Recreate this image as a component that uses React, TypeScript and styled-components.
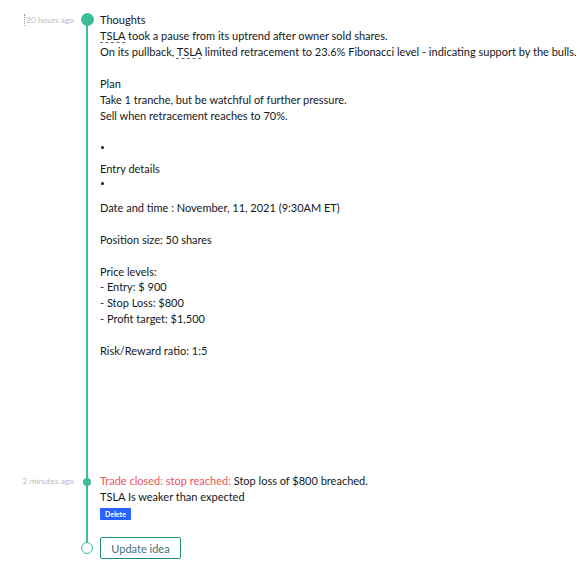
import React from "react";
import styled, { createGlobalStyle } from "styled-components";

const Global = createGlobalStyle`
  html, body { margin: 0; padding: 0; background: #ffffff; }
  body { font-family: "Lato", "DejaVu Sans", sans-serif; color: #131722; }
`;

const TEAL = "#3cbc98";

const Timeline = styled.div`
  display: flex;
  flex-direction: column;
  padding-top: 12px;
  width: 580px;
`;

const Row = styled.div`
  display: flex;
  align-items: stretch;
`;

const Time = styled.div<{ $bordered?: boolean }>`
  width: 74px;
  flex: none;
  display: flex;
  justify-content: flex-end;
  align-items: flex-start;
  height: 16px;
  line-height: 16px;
  font-size: 8.4px;
  color: #bdb9c9;
  span {
    line-height: 12px;
    margin-top: 2px;
    ${(p) => (p.$bordered ? "border-left: 1px dotted #9a97a4; padding-left: 1px;" : "")}
  }
`;

const Rail = styled.div<{ $top: number; $bottom?: number | null }>`
  width: 26px;
  flex: none;
  position: relative;
  &::before {
    content: "";
    position: absolute;
    left: 12px;
    width: 2px;
    top: ${(p) => p.$top}px;
    ${(p) => (p.$bottom == null ? "bottom: 0;" : `height: ${p.$bottom}px;`)}
    background: ${TEAL};
  }
`;

const Dot = styled.div<{ $size: number; $top: number; $hollow?: boolean }>`
  position: absolute;
  left: ${(p) => 13 - p.$size / 2}px;
  top: ${(p) => p.$top - p.$size / 2}px;
  width: ${(p) => p.$size}px;
  height: ${(p) => p.$size}px;
  border-radius: 50%;
  box-sizing: border-box;
  background: ${(p) => (p.$hollow ? "#fff" : TEAL)};
  border: ${(p) => (p.$hollow ? `1px solid ${TEAL}` : "none")};
  z-index: 1;
`;

const Body = styled.div<{ $pb?: number }>`
  flex: 1;
  font-size: 11px;
  line-height: 16px;
  color: #131722;
  padding-bottom: ${(p) => p.$pb ?? 0}px;
`;

const Line = styled.div<{ $mt?: number }>`
  min-height: 16px;
  margin-top: ${(p) => p.$mt ?? 0}px;
  white-space: nowrap;
`;

const Ticker = styled.span`
  text-decoration: underline dashed #6a6d78;
  text-underline-offset: 2px;
`;

const Bullet = styled.ul<{ $mt?: number }>`
  margin: ${(p) => p.$mt ?? 0}px 0 0 0;
  padding: 0;
  list-style: none;
  li {
    height: 16px;
    position: relative;
  }
  li::before {
    content: "";
    position: absolute;
    left: 1px;
    top: 6px;
    width: 3px;
    height: 3px;
    border-radius: 50%;
    background: #131722;
  }
`;

const Red = styled.span`
  color: #f0535c;
`;

const DeleteBtn = styled.button`
  display: block;
  margin-top: 3px;
  height: 12px;
  width: 31px;
  padding: 0;
  border: none;
  border-radius: 1px;
  background: #2962ff;
  color: #fff;
  font-family: "Lato", "DejaVu Sans", sans-serif;
  font-size: 7px;
  font-weight: 700;
  line-height: 12px;
`;

const UpdateBtn = styled.button`
  width: 81px;
  height: 22px;
  box-sizing: border-box;
  border: 1px solid #1f8f7b;
  border-radius: 2px;
  background: #fff;
  color: #3e6f80;
  font-family: "Lato", "DejaVu Sans", sans-serif;
  font-size: 11px;
  padding: 0;
`;

export default function App() {
  return (
    <>
      <Global />
      <Timeline>
        <Row>
          <Time $bordered>
            <span>20 hours ago</span>
          </Time>
          <Rail $top={7}>
            <Dot $size={13} $top={7} />
          </Rail>
          <Body $pb={114}>
            <Line>Thoughts</Line>
            <Line>
              <Ticker>TSLA</Ticker> took a pause from its uptrend after owner sold shares.
            </Line>
            <Line>
              On its pullback, <Ticker>TSLA</Ticker> limited retracement to 23.6% Fibonacci level - indicating support by the bulls.
            </Line>
            <Line />
            <Line>Plan</Line>
            <Line>Take 1 tranche, but be watchful of further pressure.</Line>
            <Line>Sell when retracement reaches to 70%.</Line>
            <Line />
            <Bullet>
              <li />
            </Bullet>
            <Line $mt={5}>Entry details</Line>
            <Bullet $mt={-1}>
              <li />
            </Bullet>
            <Line $mt={8}>Date and time : November, 11, 2021 (9:30AM ET)</Line>
            <Line />
            <Line>Position size: 50 shares</Line>
            <Line />
            <Line>Price levels:</Line>
            <Line $mt={-1}>- Entry: $ 900</Line>
            <Line>- Stop Loss: $800</Line>
            <Line>- Profit target: $1,500</Line>
            <Line />
            <Line>Risk/Reward ratio: 1:5</Line>
          </Body>
        </Row>
        <Row>
          <Time>
            <span>2 minutes ago</span>
          </Time>
          <Rail $top={0}>
            <Dot $size={8} $top={9} />
          </Rail>
          <Body $pb={17}>
            <Line>
              <Red>Trade closed: stop reached:</Red> Stop loss of $800 breached.
            </Line>
            <Line>TSLA Is weaker than expected</Line>
            <DeleteBtn>Delete</DeleteBtn>
          </Body>
        </Row>
        <Row>
          <Time />
          <Rail $top={0} $bottom={5}>
            <Dot $size={12} $top={11} $hollow />
          </Rail>
          <Body>
            <UpdateBtn>Update idea</UpdateBtn>
          </Body>
        </Row>
      </Timeline>
    </>
  );
}
